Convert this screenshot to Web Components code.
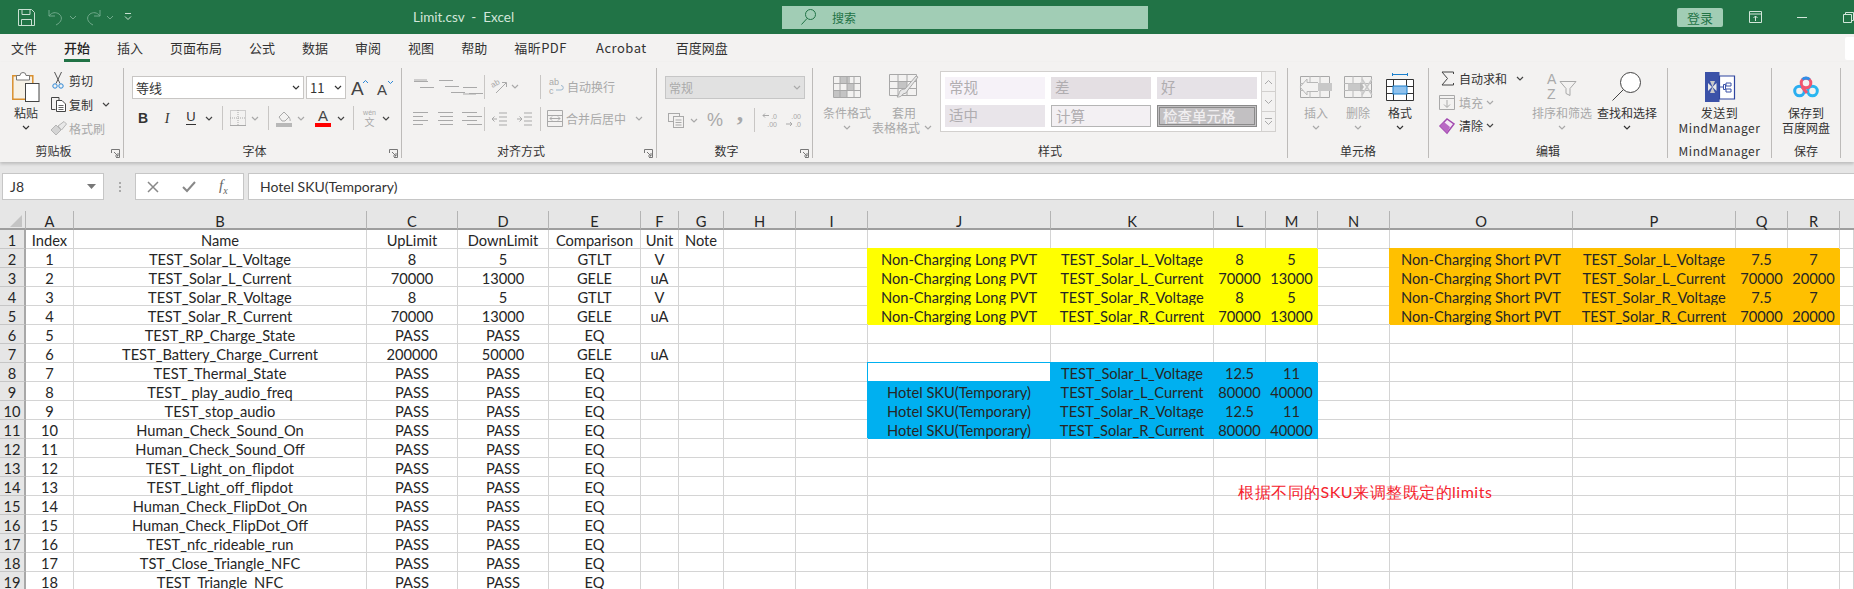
<!DOCTYPE html>
<html>
<head>
<meta charset="utf-8">
<title>Limit.csv - Excel</title>
<style>
  html, body { margin: 0; height: 100%; overflow: hidden; background: #e6e6e6; }
  body { font-family: "Noto Sans CJK SC", "Noto Sans", sans-serif; display: flex; flex-direction: column; }
</style>
</head>
<body>
<xl-titlebar></xl-titlebar>
<xl-tabs></xl-tabs>
<xl-ribbon>
  <rb-group label="剪贴板" launcher style="width:124px">
    <rb-big i="paste" label="粘贴" chev style="width:28px;margin-left:12px"></rb-big>
    <rb-col style="margin-left:10px">
      <rb-row><rb-small i="cut" w="16" label="剪切"></rb-small></rb-row>
      <rb-row><rb-small i="copy" w="16" label="复制"></rb-small><rb-ic i="chev" w="8" style="margin-left:9px"></rb-ic></rb-row>
      <rb-row><rb-small i="brush" w="16" label="格式刷" off></rb-small></rb-row>
    </rb-col>
  </rb-group>

  <rb-group label="字体" launcher style="width:278px">
    <rb-col>
      <rb-row style="margin-top:8px;--h:23px">
        <rb-select label="等线" style="width:172px;margin-left:8px"></rb-select>
        <rb-select label="11" style="width:40px;margin-left:2px"></rb-select>
        <rb-ic i="fontup" w="17" style="margin-left:5px"></rb-ic>
        <rb-ic i="fontdown" w="16" style="margin-left:9px"></rb-ic>
      </rb-row>
      <rb-row style="margin-top:7px">
        <rb-ic i="bold" w="16" style="margin-left:11px"></rb-ic>
        <rb-ic i="italic" w="16" style="margin-left:8px"></rb-ic>
        <rb-ic i="under" w="16" style="margin-left:8px"></rb-ic>
        <rb-ic i="chev" w="8" style="margin-left:6px"></rb-ic>
        <rb-ic i="sep" w="1" style="margin-left:9px"></rb-ic>
        <rb-ic i="borders" w="16" off style="margin-left:7px"></rb-ic>
        <rb-ic i="chev" w="8" off style="margin-left:5px"></rb-ic>
        <rb-ic i="sep" w="1" style="margin-left:9px"></rb-ic>
        <rb-ic i="bucket" w="16" off style="margin-left:7px"></rb-ic>
        <rb-ic i="chev" w="8" off style="margin-left:5px"></rb-ic>
        <rb-ic i="fontcolor" w="16" style="margin-left:10px"></rb-ic>
        <rb-ic i="chev" w="8" style="margin-left:6px"></rb-ic>
        <rb-ic i="sep" w="1" style="margin-left:8px"></rb-ic>
        <rb-ic i="wen" w="15" off style="margin-left:8px"></rb-ic>
        <rb-ic i="chev" w="8" style="margin-left:5px"></rb-ic>
      </rb-row>
    </rb-col>
  </rb-group>

  <rb-group label="对齐方式" launcher style="width:255px">
    <rb-col>
      <rb-row style="margin-top:7px;--h:23px">
        <rb-ic i="valtop" w="15" off style="margin-left:11px"></rb-ic>
        <rb-ic i="valmid" w="15" off style="margin-left:10px"></rb-ic>
        <rb-ic i="valbot" w="15" off style="margin-left:9px"></rb-ic>
        <rb-ic i="sep" w="1" style="margin-left:7px"></rb-ic>
        <rb-ic i="orient" w="16" off style="margin-left:7px"></rb-ic>
        <rb-ic i="chev" w="8" off style="margin-left:3px"></rb-ic>
        <rb-ic i="sep" w="1" style="margin-left:21px"></rb-ic>
        <rb-small i="wrap" w="15" label="自动换行" off style="margin-left:8px"></rb-small>
      </rb-row>
      <rb-row style="margin-top:9px;--h:23px">
        <rb-ic i="alleft" w="15" off style="margin-left:11px"></rb-ic>
        <rb-ic i="alcenter" w="15" off style="margin-left:10px"></rb-ic>
        <rb-ic i="alright" w="15" off style="margin-left:9px"></rb-ic>
        <rb-ic i="sep" w="1" style="margin-left:7px"></rb-ic>
        <rb-ic i="outdent" w="15" off style="margin-left:7px"></rb-ic>
        <rb-ic i="indent" w="15" off style="margin-left:10px"></rb-ic>
        <rb-ic i="sep" w="1" style="margin-left:8px"></rb-ic>
        <rb-small i="merge" w="16" label="合并后居中" off style="margin-left:6px"></rb-small>
        <rb-ic i="chev" w="8" off style="margin-left:9px"></rb-ic>
      </rb-row>
    </rb-col>
  </rb-group>

  <rb-group label="数字" launcher style="width:156px">
    <rb-col>
      <rb-row style="margin-top:8px;--h:23px">
        <rb-select label="常规" off style="width:140px;margin-left:8px"></rb-select>
      </rb-row>
      <rb-row style="margin-top:9px">
        <rb-ic i="acct" w="16" off style="margin-left:11px"></rb-ic>
        <rb-ic i="chev" w="8" off style="margin-left:6px"></rb-ic>
        <rb-ic i="percent" w="16" off style="margin-left:9px"></rb-ic>
        <rb-ic i="comma" w="8" off style="margin-left:13px"></rb-ic>
        <rb-ic i="sep" w="1" style="margin-left:10px"></rb-ic>
        <rb-ic i="decinc" w="15" off style="margin-left:7px"></rb-ic>
        <rb-ic i="decdec" w="15" off style="margin-left:9px"></rb-ic>
      </rb-row>
    </rb-col>
  </rb-group>

  <rb-group label="样式" style="width:475px">
    <rb-big i="cond" label="条件格式" chev off style="width:54px;margin-left:7px"></rb-big>
    <rb-big i="table" label="套用|表格格式" inchev off style="width:60px"></rb-big>
    <rb-gallery style="margin-left:6px;margin-top:3px"></rb-gallery>
  </rb-group>

  <rb-group label="单元格" style="width:141px">
    <rb-big i="cellins" label="插入" chev off style="width:42px;margin-left:7px"></rb-big>
    <rb-big i="celldel" label="删除" chev off style="width:42px"></rb-big>
    <rb-big i="cellfmt" label="格式" chev style="width:42px"></rb-big>
  </rb-group>

  <rb-group label="编辑" style="width:239px">
    <rb-col style="margin-left:10px;margin-top:-1px;width:93px;--h:23.5px">
      <rb-row><rb-small i="sum" w="16" gap="4" label="自动求和"></rb-small><rb-ic i="chev" w="8" style="margin-left:9px"></rb-ic></rb-row>
      <rb-row><rb-small i="filldown" w="16" gap="4" label="填充" off></rb-small><rb-ic i="chev" w="8" off style="margin-left:3px"></rb-ic></rb-row>
      <rb-row><rb-small i="eraser" w="16" gap="4" label="清除"></rb-small><rb-ic i="chev" w="8" style="margin-left:3px"></rb-ic></rb-row>
    </rb-col>
    <rb-big i="sort" label="排序和筛选" chev off style="width:60px"></rb-big>
    <rb-big i="find" label="查找和选择" chev style="width:60px;margin-left:5px"></rb-big>
  </rb-group>

  <rb-group label="MindManager" style="width:104px;letter-spacing:.5px">
    <rb-big i="mind" label="发送到|MindManager" style="width:103px"></rb-big>
  </rb-group>

  <rb-group label="保存" style="width:69px">
    <rb-big i="baidu" label="保存到|百度网盘" style="width:68px"></rb-big>
  </rb-group>
</xl-ribbon>
<xl-formula ref="J8" value="Hotel SKU(Temporary)"></xl-formula>
<xl-sheet></xl-sheet>

<script>
const chevPts = '1,1 4,4 7,1';

// ribbon icons, drawn with currentColor so the disabled ones can go grey
const ICONS = {
  chev: `<svg width="8" height="5"><polyline points="${chevPts}" fill="none" stroke="currentColor" stroke-width="1.2"/></svg>`,
  sep: `<svg width="1" height="24"><rect width="1" height="24" fill="#c8c6c4"/></svg>`,
  paste: `<svg width="28" height="31" viewBox="0 0 28 31"><path d="M.8 4.8h20v23.4H.8z" fill="#f6f1e6" stroke="#d9902f" stroke-width="1.5"/><path d="M4.5 9V4.5h3.5a3 3 0 0 1 6 0h3.5V9z" fill="#fff" stroke="#777"/><rect x="13.5" y="12.5" width="13.5" height="18" fill="#fff" stroke="#444"/></svg>`,
  cut: `<svg width="12" height="17"><path d="M2.5 0L8 11.5M9.5 0L4 11.5" stroke="#555" fill="none"/><circle cx="3" cy="14" r="2.2" fill="none" stroke="#2b88d8"/><circle cx="9" cy="14" r="2.2" fill="none" stroke="#2b88d8"/></svg>`,
  copy: `<svg width="17" height="16"><path d="M5.5 13.5h-4v-12h7.5v2.5" fill="none" stroke="#444"/><path d="M6.5 4.5h5.5l3.5 3.5v7.5h-9z" fill="#fff" stroke="#444"/><path d="M8.5 9.500h5M8.500 11.500h5M8.500 13.500h5" stroke="#666"/></svg>`,
  brush: `<svg width="17" height="15"><path d="M1 9l5-5 5 5-5 5z" fill="#d4d4d4" stroke="#b5b5b5"/><path d="M8 5l6-4.500 2.500 2.500-5 6z" fill="#e8e8e8" stroke="#b5b5b5"/></svg>`,
  fontup: `<svg width="17" height="18"><text x="0" y="16" font-size="19" fill="#444" font-family="Liberation Sans">A</text><polyline points="12,4 14.500,1.500 17,4" fill="none" stroke="#2b88d8"/></svg>`,
  fontdown: `<svg width="16" height="18"><text x="0" y="16" font-size="15" fill="#444" font-family="Liberation Sans">A</text><polyline points="11,2 13.500,4.500 16,2" fill="none" stroke="#2b88d8"/></svg>`,
  bold: `<svg width="16" height="16"><text x="8" y="13" text-anchor="middle" font-size="14" font-weight="bold" fill="#333" font-family="Liberation Sans">B</text></svg>`,
  italic: `<svg width="16" height="16"><text x="8" y="13" text-anchor="middle" font-size="14" font-style="italic" fill="#333" font-family="Liberation Serif">I</text></svg>`,
  under: `<svg width="16" height="18"><text x="8" y="12" text-anchor="middle" font-size="13" fill="#333" font-family="Liberation Sans">U</text><rect x="3" y="15" width="10" height="1" fill="#333"/></svg>`,
  borders: `<svg width="16" height="16"><path d="M.5.500h15v15H.500z" fill="none" stroke="currentColor" stroke-dasharray="1 1"/><path d="M8 0v16M0 8h16" stroke="currentColor" stroke-dasharray="1 1"/><path d="M0 15.500h16" stroke="currentColor"/></svg>`,
  bucket: `<svg width="16" height="17"><path d="M3 7l5-5 5 5-4 4H6z" fill="none" stroke="currentColor"/><path d="M13 7c1 2 1.500 3 1 4" stroke="currentColor" fill="none"/><rect y="13" width="16" height="4" fill="#b8b8b8"/></svg>`,
  fontcolor: `<svg width="16" height="18"><text x="8" y="12" text-anchor="middle" font-size="15" fill="#444" font-family="Liberation Sans">A</text><rect y="14" width="16" height="4" fill="#f00"/></svg>`,
  wen: `<svg width="15" height="18"><text x="7.500" y="6" text-anchor="middle" font-size="7" fill="currentColor" font-family="Liberation Sans">wén</text><text x="7.500" y="17" text-anchor="middle" font-size="10" fill="currentColor">文</text></svg>`,
  valtop: lines([[1,14],[7,14]], 2, 'M1 1h13'),
  valmid: lines([[1,14],[7,14],[13,14]], 1),
  valbot: lines([[1,14],[7,14]], 8, 'M1 15h13'),
  alleft: lines([[0,15],[0,10],[0,15],[0,10]], 1, '', 4),
  alcenter: lines([[0,15],[2,13],[0,15],[2,13]], 1, '', 4),
  alright: lines([[0,15],[5,15],[0,15],[5,15]], 1, '', 4),
  orient: `<svg width="16" height="17"><text x="0" y="8" font-size="8" fill="currentColor" font-family="Liberation Sans" transform="rotate(-30 4 8)">ab</text><path d="M4 15L14 5M10 4.500h4.500v4.500" fill="none" stroke="currentColor"/></svg>`,
  wrap: `<svg width="15" height="17"><text x="0" y="7" font-size="9" fill="currentColor" font-family="Liberation Sans">ab</text><text x="0" y="16" font-size="9" fill="currentColor" font-family="Liberation Sans">c</text><path d="M7 12h5a2.200 2.200 0 0 0 0-4.500" fill="none" stroke="#9bb7cf"/></svg>`,
  outdent: `<svg width="15" height="14"><path d="M7 1h8M7 5h8M7 9h8M7 13h8M5 7H0M2.500 4.500L0 7l2.500 2.500" fill="none" stroke="currentColor"/></svg>`,
  indent: `<svg width="15" height="14"><path d="M7 1h8M7 5h8M7 9h8M7 13h8M0 7h5M2.500 4.500L5 7 2.500 9.500" fill="none" stroke="currentColor"/></svg>`,
  merge: `<svg width="16" height="17"><path d="M.5.500h15v16H.500zM.5 5.500h15M.5 11.500h15" fill="none" stroke="currentColor"/><path d="M3 8.500h10M5 6.500l-2 2 2 2M11 6.500l2 2-2 2" fill="none" stroke="currentColor"/></svg>`,
  acct: `<svg width="16" height="16"><rect x=".5" y="1.500" width="11" height="8" fill="none" stroke="currentColor"/><rect x="5.500" y="4.500" width="10" height="11" fill="#f3f2f1" stroke="currentColor"/><path d="M7.500 8h6M7.500 10.500h6M7.500 13h6" stroke="currentColor"/></svg>`,
  percent: `<svg width="18" height="20"><text x="9" y="16" text-anchor="middle" font-size="18" fill="currentColor" font-family="Liberation Sans">%</text></svg>`,
  comma: `<svg width="8" height="20"><text x="4" y="11" text-anchor="middle" font-size="26" font-weight="bold" fill="currentColor" font-family="Liberation Serif">,</text></svg>`,
  decinc: `<svg width="15" height="16"><path d="M7 3.500H1M3 1.500l-2 2 2 2" fill="none" stroke="currentColor"/><text x="15" y="7" text-anchor="end" font-size="7" fill="currentColor" font-family="Liberation Sans">.0</text><text x="15" y="15" text-anchor="end" font-size="7" fill="currentColor" font-family="Liberation Sans">.00</text></svg>`,
  decdec: `<svg width="15" height="16"><text x="15" y="7" text-anchor="end" font-size="7" fill="currentColor" font-family="Liberation Sans">.00</text><path d="M0 12h6M4 10l2 2-2 2" fill="none" stroke="currentColor"/><text x="15" y="15" text-anchor="end" font-size="7" fill="currentColor" font-family="Liberation Sans">.0</text></svg>`,
  cond: `<svg width="28" height="22"><path d="M.5.500h27v21H.500z" fill="#f3f2f1" stroke="#a8a8a8"/><path d="M7 1h10v7H7zM14 8h7v7h-7zM1 15h13v6H1z" fill="#c4c4c4"/><path d="M7 0v22M14 0v22M21 0v22M0 7.500h28M0 14.500h28" stroke="#a8a8a8" fill="none"/></svg>`,
  table: `<svg width="30" height="26"><path d="M.5.500h27v21H.500z" fill="#f3f2f1" stroke="#a8a8a8"/><path d="M9 8h9v7H9z" fill="#c4c4c4"/><path d="M9 0v22M18 0v22M0 7.500h28M0 14.500h28" stroke="#a8a8a8"/><path d="M29 3L19 16l-2 3-3 1c-2 3-4 3-6 3 2-2 2-4 3-6 2-2 4-2 5-2L27 2z" fill="#e8e8e8" stroke="#a8a8a8"/></svg>`,
  cellins: `<svg width="32" height="22"><path d="M.5.500h29v21H.500z" fill="none" stroke="#a8a8a8"/><path d="M10 0v22M20 0v22M0 7.500h30M0 14.500h30" stroke="#b8b8b8"/><rect x="10" y="7" width="22" height="8" fill="#c8c8c8"/><path d="M18 6.500H7V3L0 11l7 8v-3.500h11" fill="#f3f2f1" stroke="#b8b8b8"/></svg>`,
  celldel: `<svg width="29" height="22"><path d="M.5.500h27v21H.500z" fill="none" stroke="#a8a8a8"/><path d="M9 0v22M18 0v22M0 7.500h28M0 14.500h28" stroke="#b8b8b8"/><path d="M4 7.500h12v7H4z" fill="#c8c8c8"/><path d="M16 6v10l4-5z" fill="#b8b8b8"/><path d="M18 3l10 16M28 3L18 19" stroke="#c8c8c8" stroke-width="1.500"/></svg>`,
  cellfmt: `<svg width="28" height="29"><path d="M6.500 1v3M21.500 1v3M6.500 2.500h15" stroke="#1b7fcc" fill="none"/><path d="M.5 7.500h27v21H.500z" fill="#fff" stroke="#333"/><path d="M7.500 7v22M20.500 7v22M0 14.500h28M0 21.500h28" stroke="#333"/><rect x="7" y="14" width="14" height="8" fill="#8fc1ec" stroke="#1b7fcc"/></svg>`,
  sum: `<svg width="13" height="15"><path d="M12.500 3V1H1l5.500 6.500L1 14h11.500v-2" fill="none" stroke="#444"/></svg>`,
  filldown: `<svg width="16" height="15"><path d="M.5.500h15v14H.500zM.5 3.500h15" fill="#f3f2f1" stroke="currentColor"/><path d="M8 5v7M5 9.500l3 3 3-3" fill="none" stroke="currentColor"/></svg>`,
  eraser: `<svg width="16" height="16"><path d="M1 8l7-7 7 5-7 9z" fill="#f5e9f5" stroke="#a24ab0" stroke-width="1.500"/><path d="M1 8l4-4 6 5-3 6z" fill="#b968c4"/></svg>`,
  sort: `<svg width="30" height="27"><text x="0" y="11" font-size="14" fill="currentColor" font-family="Liberation Sans">A</text><text x="0" y="26" font-size="14" fill="currentColor" font-family="Liberation Sans">Z</text><path d="M13 8.500h16l-6 7v7l-4-2v-5z" fill="#f3f2f1" stroke="currentColor"/></svg>`,
  find: `<svg width="30" height="29"><circle cx="18.500" cy="10.500" r="10" fill="#fff" stroke="#444"/><path d="M11.500 17.500L.5 28.500" stroke="#444"/></svg>`,
  mind: `<svg width="30" height="30"><rect width="14.500" height="30" fill="#3b52a8"/><path d="M14.500 4h15v23h-15z" fill="#fff" stroke="#2f45a0" stroke-width="1.200"/><path d="M3 11l4 4-4 4zM11.500 11l-4 4 4 4z" fill="#e8e8e8"/><path d="M5 9h5l-2.500 6zM5 21h5l-2.500-6z" fill="#c9c9c9"/><path d="M15 15h3M18.500 12.500h2v5h-2zM21 11h5v3h-5zM21 17h5v3h-5z" fill="none" stroke="#3b52a8"/></svg>`,
  baidu: `<svg width="26" height="22"><circle cx="6.500" cy="15" r="4.800" fill="none" stroke="#2aaef0" stroke-width="3"/><circle cx="19.500" cy="15" r="4.800" fill="none" stroke="#2ab6f0" stroke-width="3"/><circle cx="13" cy="7" r="4.800" fill="none" stroke="#f2566f" stroke-width="3"/><path d="M9.500 3.500a4.800 4.800 0 0 1 7 0" fill="none" stroke="#2f8fe8" stroke-width="3"/><path d="M9 11l5 6" stroke="#f2566f" stroke-width="3"/></svg>`
};

// rows of flat lines for the alignment buttons
function lines(rows, top, extra, step) {
  let d = extra || '';
  rows.forEach((r, n) => { d += `M${r[0]} ${top + n * (step || 6) + .5}h${r[1]}`; });
  return `<svg width="15" height="16"><path d="${d}" fill="none" stroke="currentColor"/></svg>`;
}

class XlTitlebar extends HTMLElement {
  constructor() {
    super();
    this.attachShadow({ mode: 'open' });
    this.shadowRoot.innerHTML = `
    <style>
      :host { display: flex; align-items: center; height: 34px; flex: none; background: #217346; color: #d3e6da; font-size: 12px; }
      svg { display: block; flex: none; }
      .title { width: 98px; margin-left: 281px; white-space: nowrap; font: 13.500px "Lato", "Noto Sans", sans-serif; }
      .search { display: flex; align-items: center; box-sizing: border-box; width: 367px; height: 23px; margin-left: 271px; background: #a1cdb5; color: #217346; font-size: 12px; }
      .search svg { margin: 0 16px 0 19px; }
      .login { display: flex; align-items: center; justify-content: center; width: 46px; height: 19px; margin-left: 529px; border-radius: 2px; background: #a1cdb5; color: #217346; font-size: 13px; }
    </style>
    <svg style="margin-left:18px" width="17" height="17" fill="none" stroke="#c9e0d2"><path d="M.5.500h13l3 3v13H.500z"/><path d="M4 .500v5h8v-5M3.500 16.500v-6h10v6"/></svg>
    <svg style="margin-left:13px" width="16" height="17" fill="none" stroke="#6fa98a"><path d="M1 1v6h6M1 7c3-4 7-4 10-2 4 3 3 8-3 11"/></svg>
    <svg style="margin-left:5px" width="8" height="5" fill="none" stroke="#6fa98a"><polyline points="${chevPts}"/></svg>
    <svg style="margin-left:8px" width="16" height="17" fill="none" stroke="#6fa98a"><path d="M15 1v6H9M15 7C12 3 8 3 5 5c-4 3-3 8 3 11"/></svg>
    <svg style="margin-left:5px" width="8" height="5" fill="none" stroke="#6fa98a"><polyline points="${chevPts}"/></svg>
    <svg style="margin-left:10px" width="8" height="8" fill="none" stroke="#c9e0d2"><path d="M1 .5h6M1 3.500l3 3 3-3"/></svg>
    <div class="title">Limit.csv&nbsp; -&nbsp; Excel</div>
    <div class="search">
      <svg width="15" height="16" fill="none" stroke="#217346"><circle cx="9.500" cy="5.500" r="5"/><path d="M6 9.500L.5 15.500"/></svg>
      <span>搜索</span>
    </div>
    <div class="login">登录</div>
    <svg style="margin-left:26px" width="13" height="12" fill="none" stroke="#d3e6da"><path d="M.5.500h12v11H.500zM.5 3h12M6.500 10V5M4.500 7l2-2 2 2"/></svg>
    <svg style="margin-left:35px" width="10" height="1"><rect width="10" height="1" fill="#d3e6da"/></svg>
    <svg style="margin-left:36px" width="11" height="11" fill="none" stroke="#d3e6da"><path d="M.5 2.500h8v8h-8zM2.500 2.500v-2h8v8h-2"/></svg>`;
  }
}
customElements.define('xl-titlebar', XlTitlebar);

class XlTabs extends HTMLElement {
  constructor() {
    super();
    this.attachShadow({ mode: 'open' });
    const tabs = ['文件', '开始', '插入', '页面布局', '公式', '数据', '审阅', '视图', '帮助', '福昕PDF', 'Acrobat', '百度网盘'];
    this.shadowRoot.innerHTML = `
    <style>
      :host { display: flex; gap: 27px; box-sizing: border-box; flex: none; height: 28px; padding-left: 11px; background: #f3f2f1; color: #333; font-size: 13px; line-height: 28px; position: relative; }
      div { white-space: nowrap; }
      .on { font-weight: 500; color: #222; box-shadow: inset 0 -3px 0 #217346; }
      .latin { letter-spacing: .5px; margin-right: 2px; }
      .pin { position: absolute; right: 0; top: 3px; width: 9px; height: 23px; background: #fff; border-radius: 2px 0 0 2px; }
    </style>
    ${tabs.map((t) => `<div class="${t == '开始' ? 'on' : /[A-Z]/.test(t) ? 'latin' : ''}">${t}</div>`).join('')}
    <span class="pin"></span>`;
  }
}
customElements.define('xl-tabs', XlTabs);

class XlRibbon extends HTMLElement {
  constructor() {
    super();
    this.attachShadow({ mode: 'open' });
    this.shadowRoot.innerHTML = `
    <style>
      :host { display: flex; box-sizing: border-box; flex: none; height: 100px; padding: 6px 0 4px; background: #f3f2f1; box-shadow: 0 2px 3px rgba(0,0,0,.18); position: relative; z-index: 1; }
    </style>
    <slot></slot>`;
  }
}
customElements.define('xl-ribbon', XlRibbon);

class RbGroup extends HTMLElement {
  constructor() {
    super();
    this.attachShadow({ mode: 'open' });
    const launcher = this.hasAttribute('launcher');
    this.shadowRoot.innerHTML = `
    <style>
      :host { display: flex; flex-direction: column; flex: none; box-sizing: border-box; height: 90px; border-right: 1px solid #bdbbb9; position: relative; color: #333; }
      .body { display: flex; flex: none; height: 77px; }
      .label { height: 12px; line-height: 12px; text-align: center; font-size: 12px; white-space: nowrap; padding-right: ${launcher ? 16 : 0}px; }
      svg { position: absolute; right: 3px; bottom: 0; }
    </style>
    <div class="body"><slot></slot></div>
    <div class="label">${this.getAttribute('label')}</div>
    ${launcher ? '<svg width="9" height="9" fill="none" stroke="#777"><path d="M.5 4V.500H8.500V8.500H5M3 3l4 4M7 4v3H4"/></svg>' : ''}`;
  }
}
customElements.define('rb-group', RbGroup);

class RbRow extends HTMLElement {
  constructor() {
    super();
    this.attachShadow({ mode: 'open' });
    this.shadowRoot.innerHTML = `<style>:host { display: flex; align-items: center; height: var(--h, 24px); }</style><slot></slot>`;
  }
}
customElements.define('rb-row', RbRow);

class RbCol extends HTMLElement {
  constructor() {
    super();
    this.attachShadow({ mode: 'open' });
    this.shadowRoot.innerHTML = `<style>:host { display: flex; flex-direction: column; flex: none; }</style><slot></slot>`;
  }
}
customElements.define('rb-col', RbCol);

class RbIc extends HTMLElement {
  constructor() {
    super();
    this.attachShadow({ mode: 'open' });
    this.shadowRoot.innerHTML = `
    <style>
      :host { display: flex; align-items: center; justify-content: center; flex: none; width: ${this.getAttribute('w')}px; color: ${this.hasAttribute('off') ? '#a9a9a9' : '#444'}; }
      svg { display: block; flex: none; overflow: visible; }
    </style>
    ${ICONS[this.getAttribute('i')]}`;
  }
}
customElements.define('rb-ic', RbIc);

class RbSmall extends HTMLElement {
  constructor() {
    super();
    this.attachShadow({ mode: 'open' });
    const off = this.hasAttribute('off');
    this.shadowRoot.innerHTML = `
    <style>
      :host { display: flex; align-items: center; flex: none; color: ${off ? '#a9a9a9' : '#333'}; font-size: 12px; white-space: nowrap; }
      .ic { display: flex; justify-content: center; flex: none; width: ${this.getAttribute('w')}px; margin-right: ${this.getAttribute('gap') || 3}px; }
      svg { overflow: visible; }
    </style>
    <span class="ic">${ICONS[this.getAttribute('i')]}</span><span>${this.getAttribute('label')}</span>`;
  }
}
customElements.define('rb-small', RbSmall);

class RbBig extends HTMLElement {
  constructor() {
    super();
    this.attachShadow({ mode: 'open' });
    const off = this.hasAttribute('off');
    const parts = this.getAttribute('label').split('|');
    const chev = `<svg class="ch" width="8" height="5" fill="none" stroke="currentColor" stroke-width="1.200"><polyline points="${chevPts}"/></svg>`;
    const rows = parts.map((p, n) => `<div class="line">${p}${this.hasAttribute('inchev') && n == parts.length - 1 ? chev : ''}</div>`);
    if (this.hasAttribute('chev')) rows.push(`<div class="line">${chev}</div>`);
    this.shadowRoot.innerHTML = `
    <style>
      :host { display: flex; flex-direction: column; align-items: center; flex: none; color: ${off ? '#a9a9a9' : '#333'}; font-size: 12px; }
      .ic { display: flex; align-items: center; justify-content: center; height: 37px; flex: none; }
      .line { display: flex; align-items: center; height: 15px; white-space: nowrap; }
      .ch { margin-left: 4px; margin-right: 4px; }
      svg { display: block; overflow: visible; }
    </style>
    <div class="ic">${ICONS[this.getAttribute('i')]}</div>
    ${rows.join('')}`;
  }
}
customElements.define('rb-big', RbBig);

class RbSelect extends HTMLElement {
  constructor() {
    super();
    this.attachShadow({ mode: 'open' });
    const off = this.hasAttribute('off');
    this.shadowRoot.innerHTML = `
    <style>
      :host { display: flex; align-items: center; justify-content: space-between; flex: none; box-sizing: border-box; height: 23px; padding: 0 3px 0 3px; border: 1px solid ${off ? '#c6c6c6' : '#c8c6c4'}; background: ${off ? '#e1e1e1' : '#fff'}; color: ${off ? '#aaa' : '#333'}; font-size: ${off ? 12 : 13}px; }
      svg { display: block; }
    </style>
    <span>${this.getAttribute('label')}</span>
    <svg width="8" height="5" fill="none" stroke="currentColor" stroke-width="1.200"><polyline points="${chevPts}"/></svg>`;
  }
}
customElements.define('rb-select', RbSelect);

class RbGallery extends HTMLElement {
  constructor() {
    super();
    this.attachShadow({ mode: 'open' });
    const c = (name, css) => `<div style="${css}">${name}</div>`;
    this.shadowRoot.innerHTML = `
    <style>
      :host { display: flex; flex: none; box-sizing: border-box; width: 336px; height: 61px; background: #fff; border: 1px solid #d2d0ce; }
      .cells { display: grid; grid-template-columns: repeat(3, 100px); grid-auto-rows: 22px; gap: 6px; padding: 5px 4px; width: 320px; box-sizing: border-box; }
      .cells div { box-sizing: border-box; padding: 0 4px; line-height: 20px; font-size: 14.500px; color: #b0adb0; white-space: nowrap; }
      .bar { display: flex; flex-direction: column; flex: 1; border-left: 1px solid #d2d0ce; background: #f3f2f1; color: #a9a9a9; }
      .bar span { flex: 1; display: flex; align-items: center; justify-content: center; border-bottom: 1px solid #d2d0ce; }
      .bar span:last-child { border-bottom: 0; }
    </style>
    <div class="cells">
      ${c('常规', 'background:#f6f2f8')}
      ${c('差', 'background:#e4dfe3')}
      ${c('好', 'background:#e6e2e7')}
      ${c('适中', 'background:#e9e5ea')}
      ${c('计算', 'background:#f3f0f3;border:1px solid #b5b5b5')}
      ${c('检查单元格', 'background:#c2c0c2;border:3px double #8a8a8a;color:#f0eef0;font-weight:500;line-height:16px;padding:0 3px')}
    </div>
    <div class="bar">
      <span><svg width="7" height="4" fill="none" stroke="currentColor"><polyline points="0,4 3.500,.5 7,4"/></svg></span>
      <span><svg width="7" height="4" fill="none" stroke="currentColor"><polyline points="0,0 3.500,3.500 7,0"/></svg></span>
      <span><svg width="7" height="7" fill="none" stroke="currentColor"><path d="M0 .5h7M0 3l3.500 3.500L7 3"/></svg></span>
    </div>`;
  }
}
customElements.define('rb-gallery', RbGallery);

class XlFormula extends HTMLElement {
  constructor() {
    super();
    this.attachShadow({ mode: 'open' });
    this.shadowRoot.innerHTML = `
    <style>
      :host { display: flex; flex: none; box-sizing: border-box; height: 49px; padding: 11px 0 11px 2px; background: #e6e6e6; color: #333; font: 14px "Lato", "Noto Sans", sans-serif; }
      .box { display: flex; align-items: center; box-sizing: border-box; background: #fff; border: 1px solid #c6c6c6; }
      .name { width: 102px; padding: 0 7px; justify-content: space-between; }
      .dots { display: flex; flex-direction: column; justify-content: center; gap: 2px; width: 31px; align-items: center; }
      .dots i { display: block; width: 2px; height: 2px; background: #aaa; }
      .fx { width: 109px; padding-left: 11px; gap: 23px; }
      .input { flex: 1; margin-left: 4px; padding-left: 11px; border-right: 0; }
      svg { display: block; }
      em { font: italic 15px "Liberation Serif", serif; color: #666; }
    </style>
    <div class="box name"><span>${this.getAttribute('ref')}</span><svg width="9" height="5"><path d="M0 0h9L4.500 5z" fill="#777"/></svg></div>
    <div class="dots"><i></i><i></i><i></i></div>
    <div class="box fx">
      <svg width="12" height="12" fill="none" stroke="#888" stroke-width="1.500"><path d="M1 1l10 10M11 1L1 11"/></svg>
      <svg width="14" height="12" fill="none" stroke="#888" stroke-width="2"><path d="M1 6l4 4 8-9"/></svg>
      <em>f<sub style="font-size:10px">x</sub></em>
    </div>
    <div class="box input">${this.getAttribute('value')}</div>`;
  }
}
customElements.define('xl-formula', XlFormula);

// note lying over the grid, the gridlines show through it
class XlNote extends HTMLElement {
  constructor() {
    super();
    this.attachShadow({ mode: 'open' });
    this.shadowRoot.innerHTML = `
    <style>
      :host { position: absolute; left: 1238px; top: 269px; color: #f5222d; font-size: 16px; line-height: 24px; letter-spacing: .5px; white-space: nowrap; }
    </style>
    <slot></slot>`;
  }
}
customElements.define('xl-note', XlNote);

const COL_WIDTHS = [26, 48, 293, 91, 91, 92, 38, 45, 72, 72, 183, 163, 52, 52, 72, 183, 163, 52, 52];
const COL_NAMES = 'ABCDEFGHIJKLMNOPQR'.split('');

const LEFT_ROWS = [
  ['Index', 'Name', 'UpLimit', 'DownLimit', 'Comparison', 'Unit', 'Note'],
  [1, 'TEST_Solar_L_Voltage', 8, 5, 'GTLT', 'V'],
  [2, 'TEST_Solar_L_Current', 70000, 13000, 'GELE', 'uA'],
  [3, 'TEST_Solar_R_Voltage', 8, 5, 'GTLT', 'V'],
  [4, 'TEST_Solar_R_Current', 70000, 13000, 'GELE', 'uA'],
  [5, 'TEST_RP_Charge_State', 'PASS', 'PASS', 'EQ'],
  [6, 'TEST_Battery_Charge_Current', 200000, 50000, 'GELE', 'uA'],
  [7, 'TEST_Thermal_State', 'PASS', 'PASS', 'EQ'],
  [8, 'TEST_ play_audio_freq', 'PASS', 'PASS', 'EQ'],
  [9, 'TEST_stop_audio', 'PASS', 'PASS', 'EQ'],
  [10, 'Human_Check_Sound_On', 'PASS', 'PASS', 'EQ'],
  [11, 'Human_Check_Sound_Off', 'PASS', 'PASS', 'EQ'],
  [12, 'TEST_ Light_on_flipdot', 'PASS', 'PASS', 'EQ'],
  [13, 'TEST_Light_off_flipdot', 'PASS', 'PASS', 'EQ'],
  [14, 'Human_Check_FlipDot_On', 'PASS', 'PASS', 'EQ'],
  [15, 'Human_Check_FlipDot_Off', 'PASS', 'PASS', 'EQ'],
  [16, 'TEST_nfc_rideable_run', 'PASS', 'PASS', 'EQ'],
  [17, 'TST_Close_Triangle_NFC', 'PASS', 'PASS', 'EQ'],
  [18, 'TEST_Triangle_NFC', 'PASS', 'PASS', 'EQ']
];

const SOLAR = ['TEST_Solar_L_Voltage', 'TEST_Solar_L_Current', 'TEST_Solar_R_Voltage', 'TEST_Solar_R_Current'];

// coloured blocks: first row, first column (0 based from A), fill, rows of text
const BLOCKS = [
  { row: 2, col: 9, fill: '#ffff00', rows: [[8, 5], [70000, 13000], [8, 5], [70000, 13000]], name: 'Non-Charging Long PVT' },
  { row: 2, col: 14, fill: '#ffc000', rows: [[7.5, 7], [70000, 20000], [7.5, 7], [70000, 20000]], name: 'Non-Charging Short PVT' },
  { row: 8, col: 9, fill: '#00b0f0', rows: [[12.5, 11], [80000, 40000], [12.5, 11], [80000, 40000]], name: 'Hotel SKU(Temporary)', blankFirst: true }
];

class XlSheet extends HTMLElement {
  constructor() {
    super();
    this.attachShadow({ mode: 'open' });

    const cells = {};
    LEFT_ROWS.forEach((r, y) => r.forEach((v, x) => { cells[`${y + 1}:${x}`] = { text: v }; }));
    BLOCKS.forEach((b) => {
      b.rows.forEach((r, n) => {
        const vals = [b.name, SOLAR[n], r[0], r[1]];
        vals.forEach((v, k) => {
          cells[`${b.row + n}:${b.col + k}`] = { text: v, fill: b.fill };
        });
      });
      if (b.blankFirst) cells[`${b.row}:${b.col}`] = { text: '', fill: '#fff', edge: b.fill };
    });

    let html = '<div class="corner"><svg width="12" height="12"><path d="M12 0v12H0z" fill="#c4c4c4"/></svg></div>';
    COL_NAMES.forEach((n) => { html += `<div class="ch">${n}</div>`; });
    html += '<div class="ch end"></div>';
    for (let y = 1; y <= 18; y++) {
      html += `<div class="rh">${y}</div>`;
      for (let x = 0; x < 19; x++) {
        const c = cells[`${y}:${x}`] || { text: '' };
        const style = c.fill ? `background:${c.fill};border-color:${c.fill};box-shadow:-1px -1px 0 ${c.edge || c.fill}` : '';
        html += `<div class="c" style="${style}">${c.text}</div>`;
      }
    }
    // row 19 is cut by the window, as in the reference
    html += '<div class="rh">19</div>';
    LEFT_ROWS[18].forEach((v) => { html += `<div class="c">${v}</div>`; });
    for (let x = LEFT_ROWS[18].length; x < 19; x++) html += '<div class="c"></div>';

    this.shadowRoot.innerHTML = `
    <style>
      :host { display: block; flex: 1; min-height: 0; overflow: hidden; position: relative; background: #fff; color: #262626; font: 14.670px "Lato", "Noto Sans", sans-serif; }
      .grid { display: grid; grid-template-columns: ${COL_WIDTHS.map((w) => w + 'px').join(' ')} 1fr; grid-auto-rows: 19px; }
      .grid div { box-sizing: border-box; white-space: nowrap; text-align: center; line-height: 21px; }
      .c { border-right: 1px solid #d4d4d4; border-bottom: 1px solid #d4d4d4; }
      .ch { background: #e6e6e6; border-right: 1px solid #b4b4b4; border-bottom: 2px solid #9e9e9e; }
      .end { border-right: 0; }
      .rh { background: #e6e6e6; border-right: 2px solid #a8a8a8; border-bottom: 1px solid #c6c6c6; }
      .corner { background: #e6e6e6; border-right: 1px solid #b4b4b4; border-bottom: 2px solid #9e9e9e; padding: 4px 0 0 10px; }
      .corner svg { display: block; }
    </style>
    <div class="grid">${html}</div>
    <slot></slot>`;
    this.innerHTML = '<xl-note>根据不同的SKU来调整既定的limits</xl-note>';
  }
}
customElements.define('xl-sheet', XlSheet);
</script>
</body>
</html>
